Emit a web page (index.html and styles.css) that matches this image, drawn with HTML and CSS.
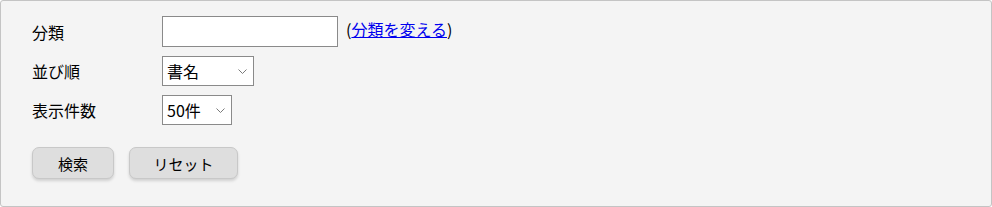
FILE: index.html
```html
<!DOCTYPE html>
<html lang="ja">
<head>
  <meta charset="UTF-8">
  <meta name="viewport" content="width=device-width, initial-scale=1.0">
  <title>検索条件</title>
  <link rel="stylesheet" href="styles.css">
</head>
<body>

  <form class="search-box" onsubmit="return false;">
    <div class="search-row">
      <label for="category">分類</label>
      <div class="field">
        <input type="text" id="category" class="text-input">
        <span class="change-link">(<a href="#">分類を変える</a>)</span>
      </div>
    </div>

    <div class="search-row">
      <label for="order">並び順</label>
      <div class="field">
        <span class="select-wrap">
          <select id="order" class="select-order">
            <option>書名</option>
            <option>著者名</option>
            <option>出版年</option>
          </select>
          <svg class="chevron" width="9" height="5" viewBox="0 0 9 5"><path d="M0.5 0.5 L4.5 4.5 L8.5 0.5" fill="none" stroke="#7a7a7a" stroke-width="1"/></svg>
        </span>
      </div>
    </div>

    <div class="search-row">
      <label for="count">表示件数</label>
      <div class="field">
        <span class="select-wrap">
          <select id="count" class="select-count">
            <option>50件</option>
            <option>100件</option>
            <option>200件</option>
          </select>
          <svg class="chevron" width="9" height="5" viewBox="0 0 9 5"><path d="M0.5 0.5 L4.5 4.5 L8.5 0.5" fill="none" stroke="#7a7a7a" stroke-width="1"/></svg>
        </span>
      </div>
    </div>

    <div class="buttons">
      <button type="submit" class="btn btn-search">検索</button>
      <button type="reset" class="btn btn-reset">リセット</button>
    </div>
  </form>

</body>
</html>
```

FILE: styles.css
```css
body {
  margin: 0;
  font-family: "Noto Sans CJK JP", "Noto Sans", sans-serif;
  color: #000;
}

.search-box {
  box-sizing: border-box;
  height: 207px;
  background-color: #f4f4f4;
  border: 1px solid #c4c4c4;
  border-radius: 3px;
  padding: 15px 31px 0;
}

.search-row {
  display: grid;
  grid-template-columns: 130px 1fr;
  align-items: center;
  margin-bottom: 9px;
}

.search-row label {
  font-size: 16px;
  line-height: 20px;
}

.field {
  display: flex;
  align-items: center;
  gap: 8px;
}

.text-input {
  box-sizing: border-box;
  width: 176px;
  height: 31px;
  border: 1px solid #8a8a8a;
  border-radius: 0;
  background: #fff;
  padding: 0 4px;
  font-size: 15px;
  outline: none;
}

.change-link {
  font-size: 16px;
  line-height: 20px;
  margin-top: -6px;
}

.change-link a {
  color: #0000ee;
}

.select-wrap {
  position: relative;
  display: inline-block;
  line-height: 0;
}

select {
  box-sizing: border-box;
  height: 30px;
  border: 1px solid #8a8a8a;
  border-radius: 0;
  background-color: #fff;
  font-family: inherit;
  font-size: 16px;
  color: #000;
  padding: 0 4px;
  appearance: none;
  -webkit-appearance: none;
}

.chevron {
  position: absolute;
  right: 7px;
  top: 13px;
  pointer-events: none;
}

.select-order {
  width: 92px;
}

.select-count {
  width: 70px;
}

.buttons {
  display: flex;
  gap: 15px;
  margin-top: 22px;
}

.btn {
  height: 32px;
  background-color: #dedede;
  border: 1px solid #c8c8c8;
  border-radius: 7px;
  box-shadow: 0 2px 3px rgba(0, 0, 0, 0.15);
  font-family: inherit;
  font-size: 15px;
  color: #000;
  cursor: pointer;
}

.btn-search {
  width: 82px;
}

.btn-reset {
  width: 109px;
}

.btn:hover {
  background-color: #d2d2d2;
}
```
